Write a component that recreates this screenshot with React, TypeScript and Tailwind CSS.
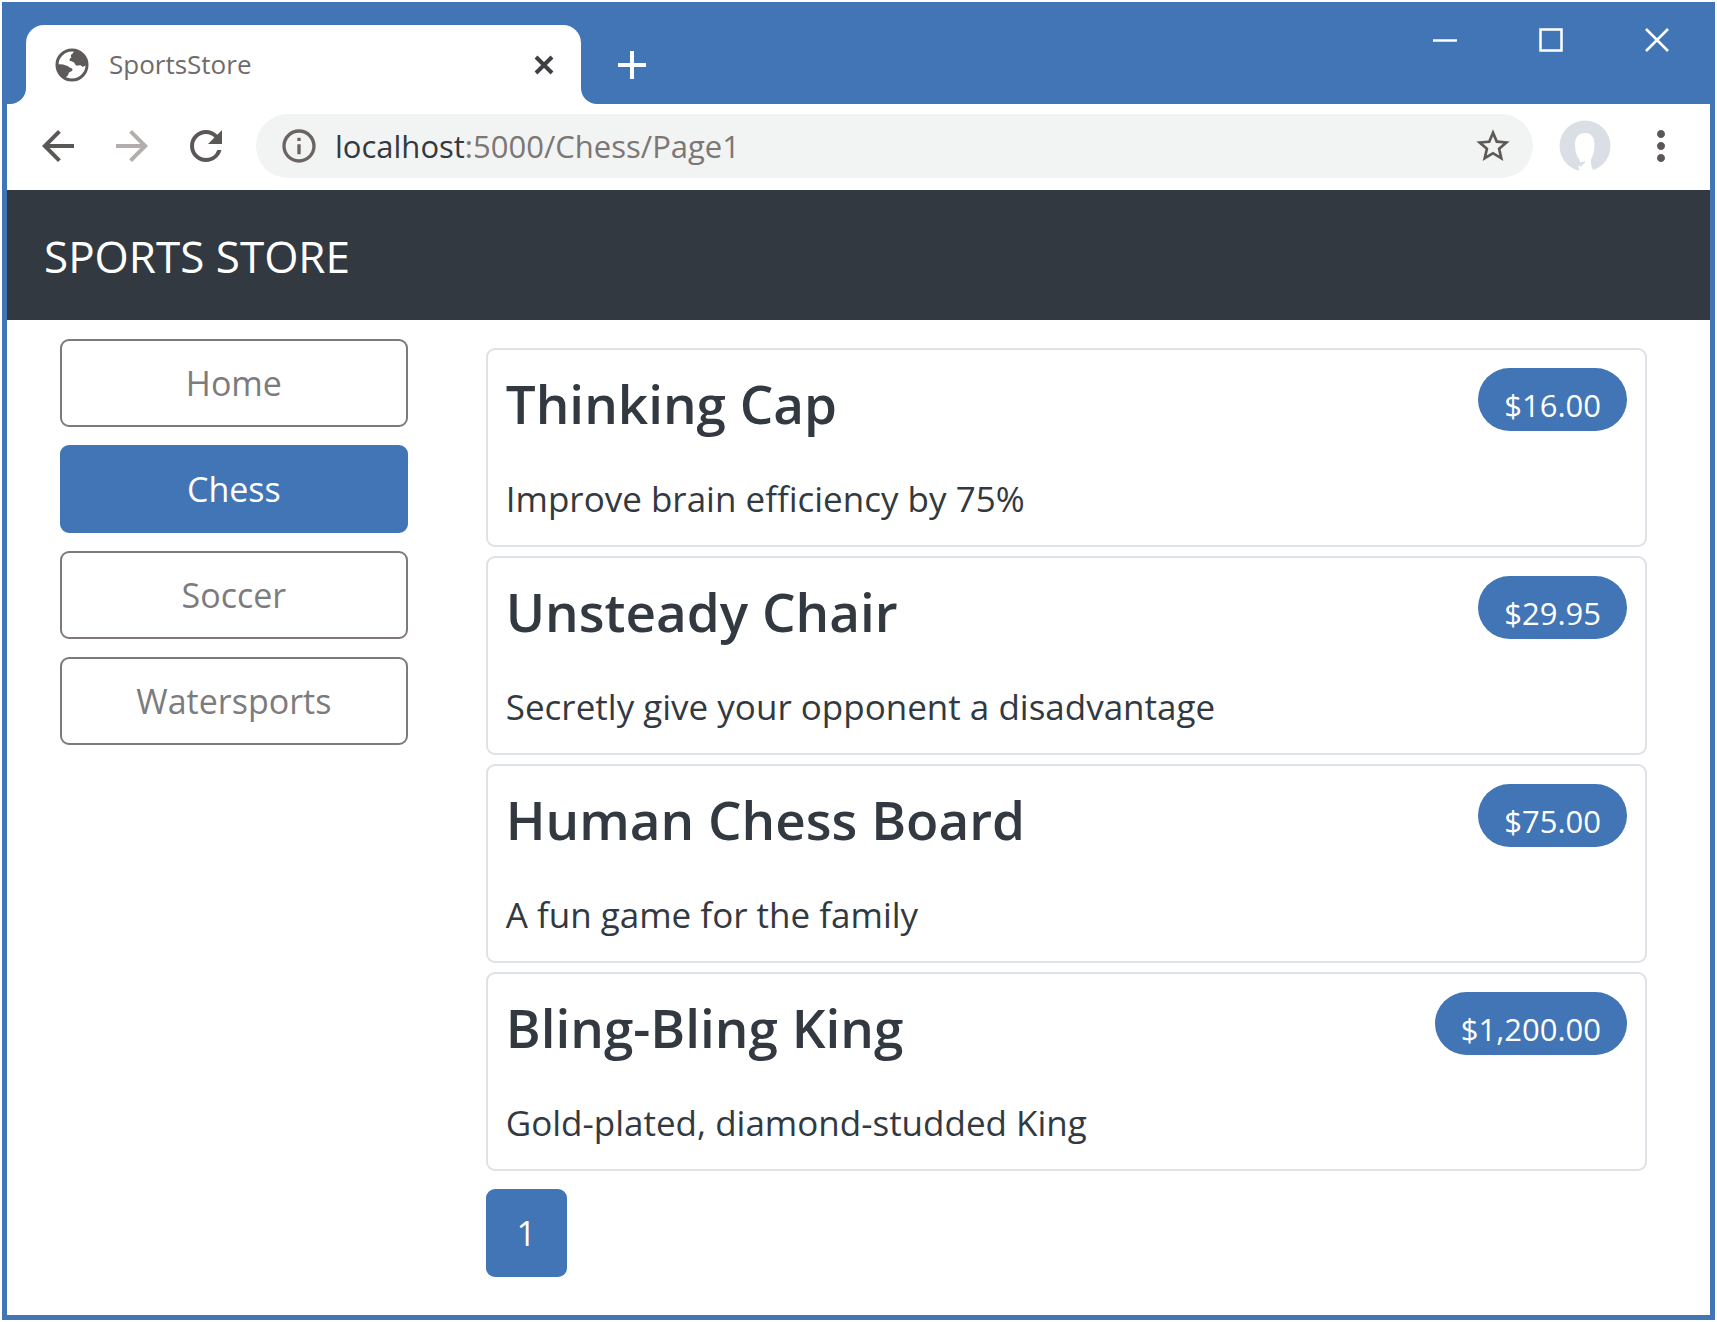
import React from "react";
import {
  MdAdd,
  MdArrowBack,
  MdArrowForward,
  MdInfoOutline,
  MdMoreVert,
  MdRefresh,
  MdStarBorder,
} from "react-icons/md";

type Product = { name: string; price: string; description: string };

const categories = ["Home", "Chess", "Soccer", "Watersports"];
const selected = "Chess";

const products: Product[] = [
  { name: "Thinking Cap", price: "$16.00", description: "Improve brain efficiency by 75%" },
  { name: "Unsteady Chair", price: "$29.95", description: "Secretly give your opponent a disadvantage" },
  { name: "Human Chess Board", price: "$75.00", description: "A fun game for the family" },
  { name: "Bling-Bling King", price: "$1,200.00", description: "Gold-plated, diamond-studded King" },
];

function GlobeIcon() {
  return (
    <svg viewBox="0 0 34 34" className="size-[34px] shrink-0" aria-hidden="true">
      <circle cx="17" cy="17" r="15" fill="#fff" stroke="#5f5a5a" strokeWidth="3" />
      <path
        d="M19 2.5c-.5 1.500-.5 2.500-2 3.500-1.500 1-1.500 2.500-.5 3.500-2 1-2.500 2-1.500 3.500 2 .5 3.500.5 4.500 2 .5 2 2 3 4 2.500 1.500-.5 3 0 4 1.500l4-2C31.500 9 26.500 3.500 19 2.500z"
        fill="#5f5a5a"
      />
      <path
        d="M2.500 16.500c3-.5 6 0 8.500 1 2.500.5 3 2 5 2.500 1.500.5 2 1.500 1 3-1.500 1-3 1-3.500 2.500 0 1.500-1 2.500-2.500 3.500L9 30C4.500 27 2 22 2.500 16.500z"
        fill="#5f5a5a"
      />
    </svg>
  );
}

function AvatarIcon() {
  return (
    <svg viewBox="0 0 52 52" className="size-[52px]" aria-hidden="true">
      <circle cx="26" cy="26" r="25.500" fill="#dadfe6" />
      <path
        d="M26 13c-6.500 0-10 4.500-10 11.500 0 7 1.500 12 4.500 15 .5 3 0 5-1 7 0 2 1 5.500 3 5.500h8c3 0 4-1.500 3-3.500-1.500-3-2-6-1.500-9C34 36 35.500 31 35.500 24.500 35.500 17.500 32.500 13 26 13z"
        fill="#fff"
      />
      <path d="M19 41c2 1.500 5 1.500 7.500 0-1 3-3 4.500-5.500 6z" fill="#dadfe6" />
    </svg>
  );
}

function TitleBar() {
  return (
    <div className="flex h-[97px] items-end bg-[#4175b5] pl-[3px]">
      <span className="size-4 shrink-0 bg-white">
        <span className="block size-full rounded-br-full bg-[#4175b5]" />
      </span>
      <div className="flex h-[79px] w-[555px] items-center rounded-t-[18px] bg-white pr-[21px] pl-[29px]">
        <GlobeIcon />
        <span className="ml-5 flex-1 text-[26px] text-[#6f6b6b]">SportsStore</span>
        <button type="button" aria-label="Close tab">
          <svg viewBox="0 0 32 32" className="size-8" aria-hidden="true">
            <path d="M8 8l16 16M24 8L8 24" stroke="#3c4045" strokeWidth="4" />
          </svg>
        </button>
      </div>
      <span className="size-4 shrink-0 bg-white">
        <span className="block size-full rounded-bl-full bg-[#4175b5]" />
      </span>
      <div className="flex h-[79px] flex-1 items-center pl-[11px] text-white">
        <button type="button" aria-label="New tab">
          <MdAdd className="size-12" />
        </button>
      </div>
      <div className="flex gap-[82px] self-start pt-[21px] pr-[41px]">
        <button type="button" aria-label="Minimize">
          <svg viewBox="0 0 24 24" className="size-6" aria-hidden="true">
            <path d="M0 12.500h24" stroke="#fff" strokeWidth="2.500" />
          </svg>
        </button>
        <button type="button" aria-label="Maximize">
          <svg viewBox="0 0 24 24" className="size-6" aria-hidden="true">
            <path d="M1.500 1.500h21v21h-21z" fill="none" stroke="#fff" strokeWidth="2.500" />
          </svg>
        </button>
        <button type="button" aria-label="Close window">
          <svg viewBox="0 0 24 24" className="size-6" aria-hidden="true">
            <path d="M1 1l22 22M23 1L1 23" stroke="#fff" strokeWidth="2.500" />
          </svg>
        </button>
      </div>
    </div>
  );
}

function Toolbar() {
  return (
    <div className="flex h-[86px] items-center gap-[26px] bg-white pr-[25px] pb-0.5 pl-[27px] text-[#5c5757]">
      <button type="button" aria-label="Back">
        <MdArrowBack className="size-12" />
      </button>
      <button type="button" aria-label="Forward" className="text-[#b3aeac]">
        <MdArrowForward className="size-12" />
      </button>
      <button type="button" aria-label="Reload">
        <MdRefresh className="size-12" />
      </button>
      <div className="flex h-16 flex-1 items-center rounded-full bg-[#f2f4f4] pr-5 pl-[23px]">
        <MdInfoOutline className="size-10 text-[#6b6462]" />
        <a href="#url" className="ml-4 flex-1 text-[31px] text-[#7c7674]">
          <span className="text-[#33393f]">localhost</span>:5000/Chess/Page1
        </a>
        <button type="button" aria-label="Bookmark" className="text-[#5f5957]">
          <MdStarBorder className="size-10" />
        </button>
      </div>
      <button type="button" aria-label="Profile">
        <AvatarIcon />
      </button>
      <button type="button" aria-label="Menu">
        <MdMoreVert className="size-12" />
      </button>
    </div>
  );
}

function ProductCard({ name, price, description }: Product) {
  return (
    <li className="rounded-[9px] border-2 border-[#dee2e6] p-[18px]">
      <div className="flex items-start justify-between">
        <h4 className="text-[53px] leading-[72px] font-semibold">{name}</h4>
        <span className="rounded-full bg-[#4175b5] px-[26px] pt-[11px] text-[31px] leading-[52px] text-white">
          {price}
        </span>
      </div>
      <p className="pt-[31px] text-[35px] leading-14">{description}</p>
    </li>
  );
}

export default function App() {
  return (
    <div className="flex min-h-screen flex-col bg-white p-0.5 font-['Open_Sans',sans-serif]">
      <div className="flex flex-1 flex-col border-[5px] border-[#4175b5] text-[#323941]">
        <TitleBar />
        <Toolbar />
        <header className="bg-[#323941] px-[37px] pt-[34px] pb-8 text-[44px] leading-16 text-white">SPORTS STORE</header>
        <div className="flex flex-1">
          <nav className="flex w-1/4 flex-col gap-[18px] pt-[19px] pr-[25px] pl-[53px]">
            {categories.map((c) => (
              <a
                key={c}
                href={"#" + c}
                className={
                  "block rounded-[9px] border-2 py-[18px] text-center text-[34px] leading-12 " +
                  (c === selected
                    ? "border-[#4175b5] bg-[#4175b5] text-white"
                    : "border-[#80797a] text-[#7c7b7e]")
                }
              >
                {c}
              </a>
            ))}
          </nav>
          <main className="flex-1 pt-7 pr-[63px] pl-[53px]">
            <ul className="flex flex-col gap-[9px]">
              {products.map((p) => (
                <ProductCard key={p.name} {...p} />
              ))}
            </ul>
            <a
              href="#page1"
              className="mt-[18px] block w-[81px] rounded-[9px] bg-[#4175b5] py-5 text-center text-[34px] leading-12 text-white"
            >
              1
            </a>
          </main>
        </div>
      </div>
    </div>
  );
}
